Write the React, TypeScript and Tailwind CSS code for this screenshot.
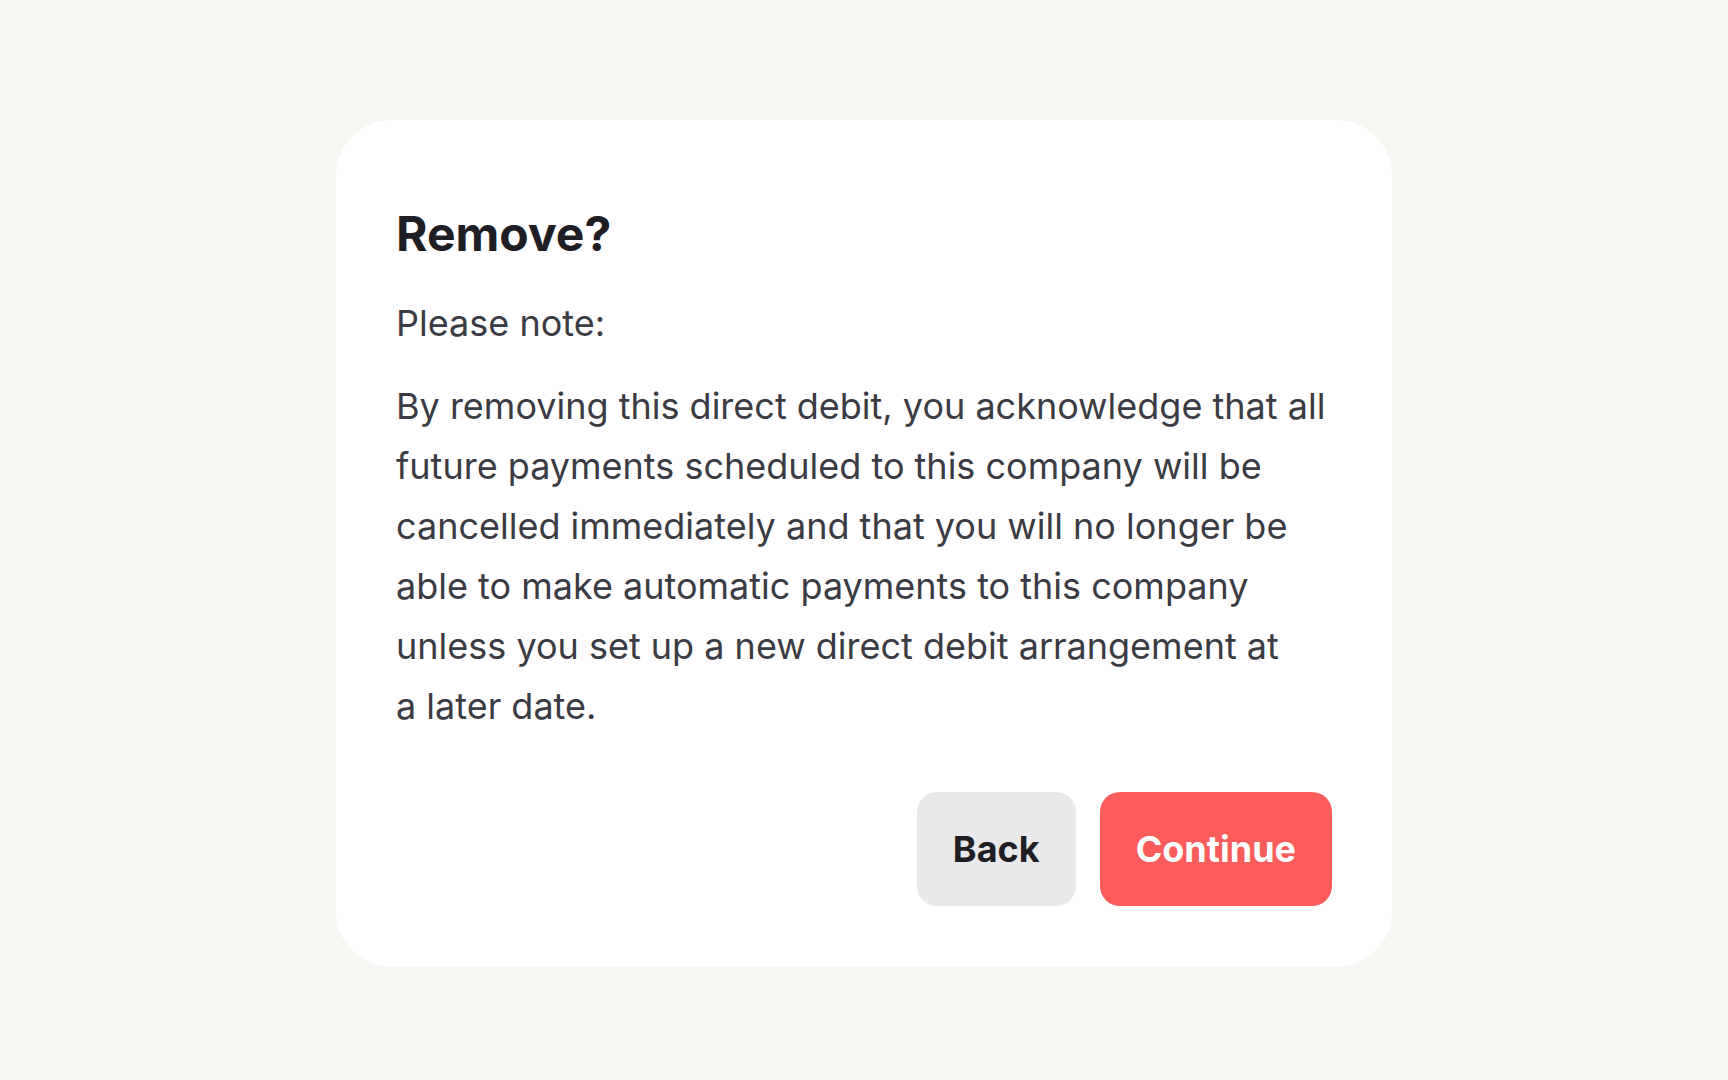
export default function App() {
  return (
    <div className="min-h-screen w-full bg-[#f7f6f3] flex justify-center items-start pt-[120px] font-['Inter',sans-serif]">
      <div className="w-[1056px] bg-white rounded-[56px] pl-[60px] pr-[60px] pt-[85px] pb-[61px]">
        {/* Title */}
        <h1 className="text-[48px] leading-[58px] font-bold text-[#1e1e24]">Remove?</h1>

        <p className="mt-[30px] text-[36px] leading-[60px] text-[#3b3b43]">Please note:</p>
        <p className="mt-[23px] text-[36px] leading-[60px] text-[#3b3b43]">
          By removing this direct debit, you acknowledge that all future payments scheduled to this
          company will be cancelled immediately and that you will no longer be able to make automatic
          payments to this company unless you set up a new direct debit arrangement at a&nbsp;later date.
        </p>

        {/* Actions */}
        <div className="mt-[56px] flex justify-end gap-[24px]">
          <button
            type="button"
            className="h-[114px] px-[36px] rounded-[20px] bg-[#e9e9eb] text-[36px] font-bold text-[#1e1e24]"
          >
            Back
          </button>
          <button
            type="button"
            className="h-[114px] px-[36px] rounded-[20px] bg-[#fa5b5b] text-[36px] font-bold text-white"
          >
            Continue
          </button>
        </div>
      </div>
    </div>
  )
}
